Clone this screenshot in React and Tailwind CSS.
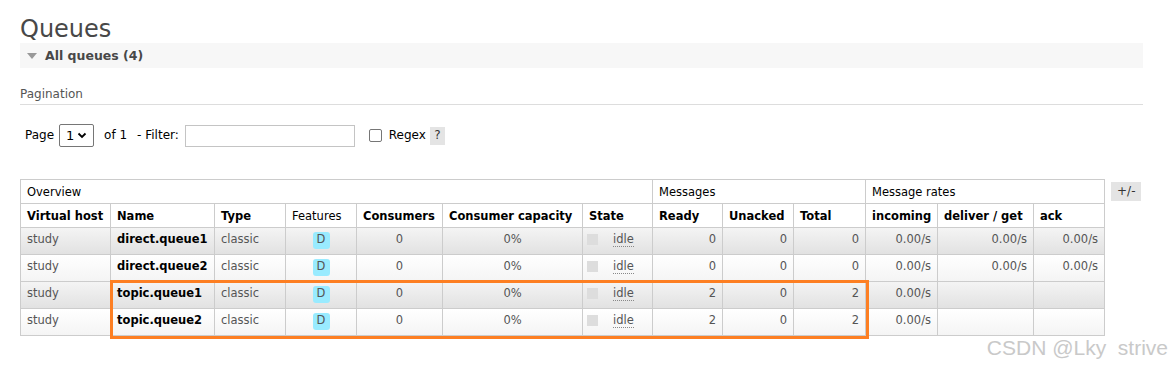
import React from "react";

const queues = [
  { name: "direct.queue1", ready: 0, unacked: 0, total: 0, incoming: "0.00/s", deliver: "0.00/s", ack: "0.00/s" },
  { name: "direct.queue2", ready: 0, unacked: 0, total: 0, incoming: "0.00/s", deliver: "0.00/s", ack: "0.00/s" },
  { name: "topic.queue1", ready: 2, unacked: 0, total: 2, incoming: "0.00/s", deliver: "", ack: "" },
  { name: "topic.queue2", ready: 2, unacked: 0, total: 2, incoming: "0.00/s", deliver: "", ack: "" },
];

const widths = [90, 104, 71, 71, 86, 140, 70, 70, 71, 72, 72, 96, 71];

export default function App() {
  const th = "border border-[#ccc] h-[24px] px-[6px] pt-[5px] align-top text-left whitespace-nowrap";
  const td = "border border-[#ccc] h-[27px] px-[6px] pt-[4px] align-top whitespace-nowrap";

  return (
    <div className="w-[1173px] h-[368px] bg-white px-[20px] text-[11.5px] leading-[15px] text-[#555] font-['DejaVu_Sans',Verdana,sans-serif] overflow-hidden">

      {/* TITLE */}
      <h1 className="pt-[15px] text-[24px] leading-[28px] text-[#484848] font-normal">Queues</h1>

      {/* SECTION BAR */}
      <div className="w-[1123px] h-[25px] bg-[#f7f7f7] flex items-center">
        <span className="ml-[7px] w-0 h-0 border-l-[5px] border-r-[5px] border-t-[6px] border-l-transparent border-r-transparent border-t-[#999]" />
        <span className="ml-[8px] font-bold text-[#484848] text-[12.5px]">All queues (4)</span>
      </div>

      {/* PAGINATION */}
      <div className="w-[1123px] mt-[19px] pb-[2px] border-b border-[#ddd] text-[#555] text-[12px]">Pagination</div>

      <div className="flex items-center mt-[19px] pl-[5px] text-black text-[12px]">
        <span>Page</span>
        <div className="ml-[5px] w-[35px] h-[23px] border border-[#767676] rounded-[2px] flex items-center justify-between px-[6px] text-[13px]">
          <span>1</span>
          <svg width="10" height="7" viewBox="0 0 10 7"><path d="M1.5 1.5 L5 5 L8.5 1.5" fill="none" stroke="#000" strokeWidth="1.8" /></svg>
        </div>
        <span className="ml-[10px]">of 1</span>
        <span className="ml-[10px]">- Filter:</span>
        <div className="ml-[6px] w-[170px] h-[22px] border border-[#c4c4c4]" />
        <div className="ml-[14px] w-[13px] h-[13px] border border-[#767676] rounded-[2px]" />
        <span className="ml-[7px]">Regex</span>
        <span className="ml-[4px] w-[15px] h-[18px] bg-[#e4e4e4] text-[#333] flex items-center justify-center">?</span>
      </div>

      {/* TABLE */}
      <div className="flex items-start mt-[32px]">
        <div className="relative">
          <table className="table-fixed border-collapse w-[1084px]">
            <colgroup>
              {widths.map((w, i) => (
                <col key={i} style={{ width: w }} />
              ))}
            </colgroup>
            <thead className="text-black">
              <tr>
                <th colSpan={7} className={`${th} font-normal`}>Overview</th>
                <th colSpan={3} className={`${th} font-normal`}>Messages</th>
                <th colSpan={3} className={`${th} font-normal`}>Message rates</th>
              </tr>
              <tr className="font-bold">
                <th className={th}>Virtual host</th>
                <th className={th}>Name</th>
                <th className={th}>Type</th>
                <th className={`${th} font-normal`}>Features</th>
                <th className={th}>Consumers</th>
                <th className={th}>Consumer capacity</th>
                <th className={th}>State</th>
                <th className={th}>Ready</th>
                <th className={th}>Unacked</th>
                <th className={th}>Total</th>
                <th className={th}>incoming</th>
                <th className={th}>deliver / get</th>
                <th className={th}>ack</th>
              </tr>
            </thead>
            <tbody>
              {queues.map((q, i) => (
                <tr
                  key={q.name}
                  className={i % 2 === 0 ? "bg-linear-to-b from-[#f4f4f4] to-[#e1e1e1]" : "bg-linear-to-b from-white to-[#f4f4f4]"}
                >
                  <td className={td}>study</td>
                  <td className={`${td} font-bold text-black`}>{q.name}</td>
                  <td className={td}>classic</td>
                  <td className={`${td} text-center`}>
                    <span className="inline-block w-[17px] h-[17px] leading-[15px] pb-[2px] rounded-[3px] bg-[#99ebff] text-[#555] text-center align-baseline">D</span>
                  </td>
                  <td className={`${td} text-center`}>0</td>
                  <td className={`${td} text-center`}>0%</td>
                  <td className={`${td} pl-[4px]`}>
                    <div className="flex items-start">
                      <span className="mt-[2px] w-[11px] h-[11px] bg-[#ddd]" />
                      <span className="ml-[15px] border-b border-dotted border-[#888] leading-[14px]">idle</span>
                    </div>
                  </td>
                  <td className={`${td} text-right`}>{q.ready}</td>
                  <td className={`${td} text-right`}>{q.unacked}</td>
                  <td className={`${td} text-right`}>{q.total}</td>
                  <td className={`${td} text-right`}>{q.incoming}</td>
                  <td className={`${td} text-right`}>{q.deliver}</td>
                  <td className={`${td} text-right`}>{q.ack}</td>
                </tr>
              ))}
            </tbody>
          </table>

          {/* highlight annotation */}
          <div className="absolute left-[90px] top-[101px] w-[759px] h-[59px] border-[3px] border-[#fd7f23] pointer-events-none" />
        </div>

        <span className="ml-[6px] mt-[3px] px-[6px] h-[19px] leading-[19px] bg-[#e4e4e4] text-[#333] text-[12px]">+/-</span>
      </div>

      {/* watermark */}
      <div className="flex justify-end -mr-[15px] mt-[0px]">
        <span className="font-['Liberation_Sans',Arial,sans-serif] text-[21px] leading-[24px] text-[#c9c9c9]">CSDN @Lky&nbsp;&nbsp;strive</span>
      </div>
    </div>
  );
}
